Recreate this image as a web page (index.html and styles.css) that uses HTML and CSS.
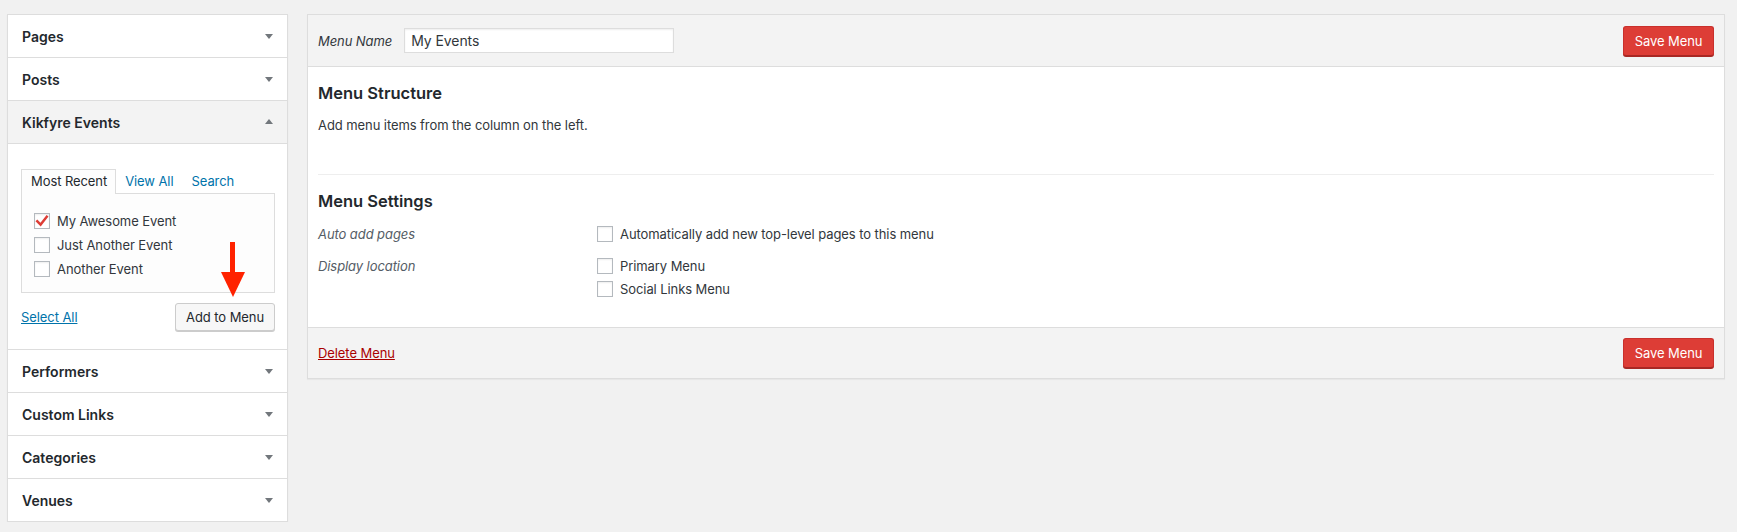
FILE: index.html
```html
<!DOCTYPE html>
<html>
<head>
<meta charset="utf-8">
<title>Menus</title>
<link rel="stylesheet" href="styles.css">
</head>
<body>
<div class="wrap">
  <div class="sidebar">
    <div class="acc-title first"><span>Pages</span><i class="tri down"></i></div>
    <div class="acc-title"><span>Posts</span><i class="tri down"></i></div>
    <div class="acc-title open"><span>Kikfyre Events</span><i class="tri up"></i></div>
    <div class="acc-body">
      <ul class="tabs">
        <li class="tab active">Most Recent</li>
        <li class="tab"><a href="#">View All</a></li>
        <li class="tab"><a href="#">Search</a></li>
      </ul>
      <div class="tabs-panel">
        <div class="item"><span class="cb checked"><svg width="14" height="14" viewBox="0 0 14 14"><path d="M2.2 7.2 L5.6 10.6 L11.8 2.6" fill="none" stroke="#dd3d36" stroke-width="2.4" stroke-linecap="square"/></svg></span>My Awesome Event</div>
        <div class="item"><span class="cb"></span>Just Another Event</div>
        <div class="item"><span class="cb"></span>Another Event</div>
      </div>
      <div class="actions">
        <a class="select-all" href="#">Select All</a>
        <button class="btn">Add to Menu</button>
      </div>
      <svg class="red-arrow" width="24" height="56" viewBox="0 0 24 56"><rect x="9" y="0" width="5" height="32" fill="#ff2200"/><polygon points="0,30 24,30 12,55" fill="#ff2200"/></svg>
    </div>
    <div class="acc-title"><span>Performers</span><i class="tri down"></i></div>
    <div class="acc-title"><span>Custom Links</span><i class="tri down"></i></div>
    <div class="acc-title"><span>Categories</span><i class="tri down"></i></div>
    <div class="acc-title"><span>Venues</span><i class="tri down"></i></div>
  </div>

  <div class="main">
    <div class="main-header">
      <label class="name-label">Menu Name</label>
      <div class="name-input">My Events</div>
      <div class="spacer"></div>
      <button class="btn-primary">Save Menu</button>
    </div>
    <div class="main-body">
      <h3 class="h-structure">Menu Structure</h3>
      <p class="hint">Add menu items from the column on the left.</p>
      <div class="divider"></div>
      <h3 class="h-settings">Menu Settings</h3>
      <div class="setting row1">
        <div class="set-label">Auto add pages</div>
        <div class="set-opts">
          <div class="opt"><span class="cb"></span>Automatically add new top-level pages to this menu</div>
        </div>
      </div>
      <div class="setting row2">
        <div class="set-label">Display location</div>
        <div class="set-opts">
          <div class="opt"><span class="cb"></span>Primary Menu</div>
          <div class="opt"><span class="cb"></span>Social Links Menu</div>
        </div>
      </div>
    </div>
    <div class="main-footer">
      <a class="delete" href="#">Delete Menu</a>
      <button class="btn-primary">Save Menu</button>
    </div>
  </div>
</div>
</body>
</html>
```

FILE: styles.css
```css
* { box-sizing: border-box; }
html, body {
  margin: 0;
  padding: 0;
  background: #f1f1f1;
  font-family: Inter, "Liberation Sans", sans-serif;
  font-size: 13px;
  letter-spacing: -0.08px;
  color: #23282d;
}
.wrap {
  display: flex;
  align-items: flex-start;
  gap: 19px;
  padding: 14px 12px 0 7px;
}
.sidebar {
  width: 281px;
  flex: none;
  border: 1px solid #dddddd;
  border-bottom: none;
  background: #fff;
  box-shadow: 0 1px 1px rgba(0,0,0,0.06);
  position: relative;
}
.acc-title {
  height: 43px;
  border-bottom: 1px solid #dddddd;
  display: flex;
  align-items: center;
  justify-content: space-between;
  padding: 0 14px 0 14px;
  font-size: 14px;
  font-weight: 600;
  letter-spacing: 0;
  color: #23282d;
  background: #fff;
}
.acc-title.open { background: #f3f3f3; }
.tri {
  display: block;
  width: 0;
  height: 0;
  border-left: 4px solid transparent;
  border-right: 4px solid transparent;
}
.tri.down { border-top: 5px solid #72777c; margin-top: 1px; }
.tri.up { border-bottom: 5px solid #72777c; margin-top: -1px; }

.acc-body {
  position: relative;
  height: 206px;
  border-bottom: 1px solid #dddddd;
  padding: 25px 12px 0 13px;
}
.tabs {
  list-style: none;
  margin: 0;
  padding: 0;
  display: flex;
  height: 24px;
}
.tab {
  height: 25px;
  line-height: 23px;
  padding: 0 8px;
  margin-bottom: -1px;
  font-size: 13px;
  border: 1px solid transparent;
  border-bottom: none;
}
.tab a { color: #0073aa; text-decoration: none; }
.tab.active {
  position: relative;
  z-index: 1;
  border-color: #dddddd;
  background: #fdfdfd;
  color: #23282d;
  padding: 0 8px 0 9px;
}
.tabs-panel {
  height: 100px;
  border: 1px solid #dddddd;
  background: #fdfdfd;
  padding: 15px 12px 0 12px;
}
.item {
  height: 24px;
  display: flex;
  align-items: center;
  font-size: 13px;
  color: #32373c;
}
.cb {
  width: 16px;
  height: 16px;
  flex: none;
  border: 1px solid #b4b9be;
  background: #fff;
  box-shadow: inset 0 1px 2px rgba(0,0,0,0.07);
  margin-right: 7px;
  display: flex;
  align-items: center;
  justify-content: center;
}
.actions {
  margin-top: 10px;
  display: flex;
  align-items: center;
  justify-content: space-between;
}
.select-all {
  color: #0073aa;
  text-decoration: underline;
  font-size: 13px;
}
.btn {
  height: 28px;
  padding: 0 10px;
  border: 1px solid #cccccc;
  background: #f7f7f7;
  border-radius: 3px;
  box-shadow: 0 1px 0 #cccccc;
  font-family: inherit;
  font-size: 13px;
  letter-spacing: -0.08px;
  color: #23282d;
}
.red-arrow {
  position: absolute;
  left: 213px;
  top: 98px;
}

.main {
  flex: 1;
  border: 1px solid #dddddd;
  background: #fff;
  box-shadow: 0 1px 1px rgba(0,0,0,0.04);
}
.main-header {
  height: 52px;
  background: #f3f3f3;
  border-bottom: 1px solid #dddddd;
  display: flex;
  align-items: center;
  padding: 0 10px;
}
.name-label {
  font-style: italic;
  color: #32373c;
  margin-right: 12px;
}
.name-input {
  width: 270px;
  height: 25px;
  border: 1px solid #dddddd;
  background: #fff;
  box-shadow: inset 0 1px 2px rgba(0,0,0,0.07);
  padding: 0 6px;
  line-height: 23px;
  font-size: 14px;
  color: #32373c;
}
.spacer { flex: 1; }
.btn-primary {
  height: 30px;
  width: 91px;
  padding: 0;
  border: 1px solid #c9302c;
  border-bottom-color: #a82824;
  border-radius: 3px;
  background: #dd3d36;
  color: #fff;
  font-family: inherit;
  font-size: 13px;
  letter-spacing: -0.08px;
  box-shadow: 0 1px 0 #a82824;
}
.main-body {
  height: 260px;
  padding: 16px 10px 0 10px;
}
.h-structure, .h-settings {
  margin: 0;
  font-size: 16.5px;
  line-height: 20px;
  font-weight: 600;
  letter-spacing: 0;
  color: #23282d;
}
.hint {
  margin: 13px 0 0 0;
  line-height: 18px;
  color: #32373c;
}
.divider {
  margin-top: 40px;
  height: 1px;
  background: #eeeeee;
}
.h-settings { margin-top: 16px; }
.setting {
  display: flex;
}
.row1 { margin-top: 13px; }
.row2 { margin-top: 12px; }
.set-label {
  width: 279px;
  flex: none;
  font-style: italic;
  color: #555d66;
  line-height: 20px;
}
.set-opts {
  display: flex;
  flex-direction: column;
  gap: 3px;
}
.opt {
  height: 20px;
  display: flex;
  align-items: center;
  color: #32373c;
}
.main-footer {
  height: 51px;
  background: #f3f3f3;
  border-top: 1px solid #dddddd;
  display: flex;
  align-items: center;
  justify-content: space-between;
  padding: 0 10px;
}
.delete {
  color: #aa0000;
  text-decoration: underline;
}
```
